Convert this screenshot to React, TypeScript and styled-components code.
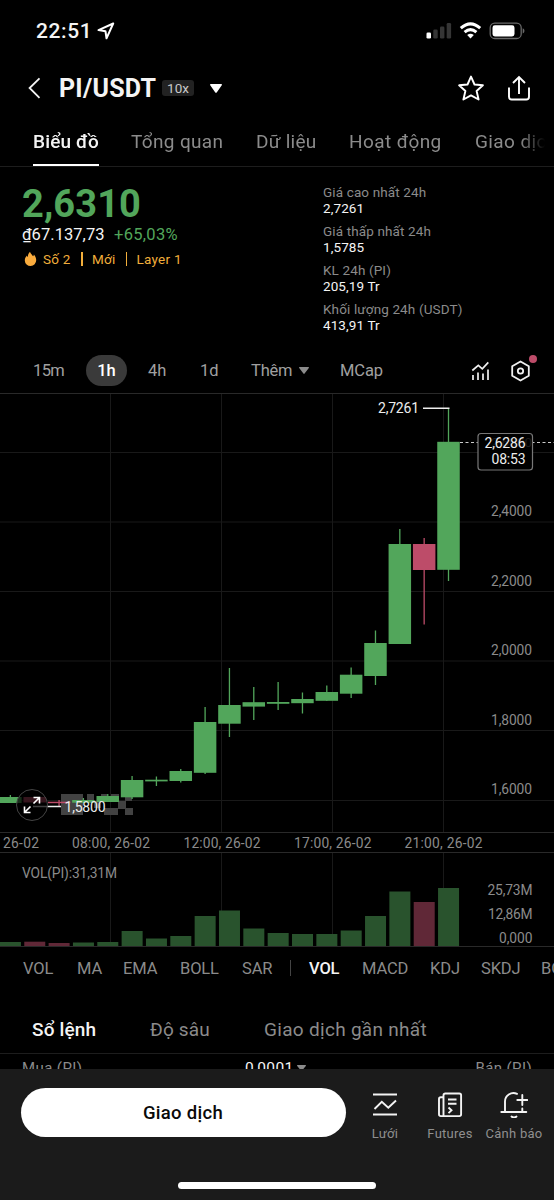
import React from "react";
import styled, { createGlobalStyle, css } from "styled-components";

const color = {
  bg: "#000",
  text: "#f4f4f4",
  muted: "#8b8b8b",
  line: "#1d1d1d",
  green: "#52a65b",
  red: "#bd4c69",
  greenDim: "#29532d",
  redDim: "#602837",
  amber: "#f2ae3b",
  bar: "#1b1b1b",
};

const fontStack = `Roboto, "Noto Sans", sans-serif`;

const GlobalStyle = createGlobalStyle`
  * { box-sizing: border-box; }
  body { margin: 0; background: ${color.bg}; overflow: hidden; }
`;

const Screen = styled.main`
  width: 554px;
  height: 1200px;
  display: flex;
  flex-direction: column;
  overflow: hidden;
  background: ${color.bg};
  color: ${color.text};
  font-family: ${fontStack};
  white-space: nowrap;
  svg { display: block; flex: none; }
`;

const StatusBar = styled.div`
  height: 60px;
  display: flex;
  align-items: center;
  padding: 2px 28px 0 36px;
`;

const Clock = styled.span`
  width: 57px;
  margin-right: 4px;
  font-size: 21px;
  font-weight: 500;
  letter-spacing: 0.6px;
`;

const Spacer = styled.div`
  flex: 1;
`;

const Header = styled.header`
  height: 57px;
  display: flex;
  align-items: center;
  padding: 0 22px 0 27px;
`;

const Pair = styled.h1`
  width: 98px;
  margin: 0 5px 0 17px;
  font-size: 25px;
  font-weight: 700;
  letter-spacing: 0.25px;
`;

const Leverage = styled.span`
  width: 32px;
  height: 16px;
  margin-right: 16px;
  border-radius: 3px;
  background: #222;
  color: #c9c9c9;
  font-size: 13.5px;
  line-height: 16.5px;
  text-align: center;
`;

const StarSlot = styled.div`
  margin-right: 21px;
`;

const Tabs = styled.nav`
  height: 50px;
  display: flex;
  flex: none;
  padding-left: 33px;
  border-bottom: 1.5px solid ${color.line};
  overflow: hidden;
  mask-image: linear-gradient(90deg, #000 520px, transparent 545px),
    linear-gradient(transparent 47px, #000 47px);
`;

const Tab = styled.div<{ $w: number; $gap: number; $active?: boolean; $ls?: number }>`
  position: relative;
  width: ${(p) => p.$w}px;
  height: 49px;
  flex: none;
  margin-right: ${(p) => p.$gap}px;
  line-height: 50px;
  font-size: 19px;
  letter-spacing: ${(p) => p.$ls ?? 0.4}px;
  color: ${(p) => (p.$active ? color.text : color.muted)};
  font-weight: ${(p) => (p.$active ? 500 : 400)};
  ${(p) =>
    p.$active &&
    css`
      border-bottom: 2.5px solid #fff;
    `}
`;

const Summary = styled.section`
  height: 181px;
  display: flex;
  padding: 15px 0 0 22px;
`;

const PriceColumn = styled.div`
  width: 301px;
`;

const LastPrice = styled.div`
  height: 43px;
  line-height: 45px;
  font-size: 38px;
  font-weight: 700;
  letter-spacing: 0.1px;
  color: ${color.green};
`;

const FiatRow = styled.div`
  display: flex;
  height: 20px;
  line-height: 20px;
  font-size: 16.5px;
`;

const Fiat = styled.span`
  width: 92px;
  letter-spacing: 0.05px;
`;

const Change = styled.span`
  color: ${color.green};
  letter-spacing: 0.3px;
`;

const TagRow = styled.div`
  display: flex;
  align-items: center;
  height: 29px;
  color: ${color.amber};
  font-size: 13.5px;
  letter-spacing: 0.25px;
`;

const Tag = styled.span<{ $w: number }>`
  width: ${(p) => p.$w}px;
`;

const TagRule = styled.span`
  width: 1.5px;
  height: 14px;
  margin-right: 9.5px;
  background: ${color.amber};
`;

const Stats = styled.dl`
  margin: 2px 0 0;
  font-size: 13.5px;
`;

const Stat = styled.div`
  height: 39px;
`;

const StatLabel = styled.dt`
  line-height: 16px;
  color: ${color.muted};
  letter-spacing: 0.13px;
`;

const StatValue = styled.dd`
  margin: 0;
  line-height: 16.5px;
  letter-spacing: 0.1px;
`;

const Intervals = styled.div`
  height: 46px;
  display: flex;
  align-items: center;
  padding: 1px 23px 0 33px;
  font-size: 16.5px;
  color: #a0a0a0;
`;

const Interval = styled.span<{ $w: number; $ls?: number }>`
  width: ${(p) => p.$w}px;
  letter-spacing: ${(p) => p.$ls ?? -0.1}px;
`;

const IntervalPill = styled.span`
  width: 41px;
  height: 31px;
  margin-right: 21px;
  border-radius: 16px;
  background: #3a3a3a;
  color: #fff;
  font-weight: 500;
  line-height: 31px;
  text-align: center;
`;

const SettingsSlot = styled.div`
  position: relative;
  margin-left: 20px;
`;

const NoticeDot = styled.i`
  position: absolute;
  top: -5px;
  right: -6px;
  width: 8px;
  height: 8px;
  border-radius: 50%;
  background: ${color.red};
`;

const ChartArea = styled.div`
  position: relative;
  height: 460px;
`;

const ExpandButton = styled.button`
  position: absolute;
  left: 16px;
  top: 396px;
  width: 32px;
  height: 32px;
  padding: 0;
  display: flex;
  align-items: center;
  justify-content: center;
  border: 1.5px solid #444;
  border-radius: 50%;
  background: rgba(0, 0, 0, 0.72);
`;

const Indicators = styled.div`
  height: 44px;
  display: flex;
  flex: none;
  align-items: center;
  padding: 0 0 4px 23px;
  overflow: hidden;
  font-size: 16.5px;
  color: ${color.muted};
`;

const Indicator = styled.span<{ $w: number; $active?: boolean }>`
  width: ${(p) => p.$w}px;
  flex: none;
  letter-spacing: -0.15px;
  color: ${(p) => (p.$active ? color.text : "inherit")};
  font-weight: ${(p) => (p.$active ? 500 : 400)};
`;

const IndicatorRule = styled.i`
  flex: none;
  width: 1px;
  height: 16px;
  margin-right: 18px;
  background: #444;
`;

const BookTabs = styled.div`
  height: 62px;
  display: flex;
  flex: none;
  align-items: center;
  padding: 14px 0 0 32px;
  border-bottom: 1px solid ${color.line};
`;

const BookTab = styled.span<{ $w: number; $active?: boolean; $ls?: number }>`
  width: ${(p) => p.$w}px;
  font-size: 19px;
  font-weight: ${(p) => (p.$active ? 500 : 400)};
  letter-spacing: ${(p) => p.$ls ?? 0.3}px;
  color: ${(p) => (p.$active ? color.text : color.muted)};
`;

const BookHead = styled.div`
  height: 15px;
  display: flex;
  flex: none;
  padding: 6px 22px 0;
  overflow: hidden;
  font-size: 15px;
  line-height: 17px;
  color: ${color.muted};
`;

const BookCell = styled.span<{ $w?: number; $ls?: number }>`
  width: ${(p) => (p.$w ? `${p.$w}px` : "auto")};
  letter-spacing: ${(p) => p.$ls ?? 0.4}px;
`;

const TickSize = styled.span`
  display: flex;
  gap: 4px;
  color: ${color.text};
  font-size: 15.5px;
  letter-spacing: 0.3px;
  svg { margin-top: 5px; }
`;

const Footer = styled.footer`
  height: 131px;
  flex: none;
  display: flex;
  flex-direction: column;
  background: ${color.bar};
`;

const Actions = styled.div`
  height: 113px;
  display: flex;
  align-items: flex-start;
  padding: 19px 0 0 21px;
`;

const TradeButton = styled.button`
  flex: none;
  width: 325px;
  height: 49px;
  padding: 0 1px 0 0;
  border: 0;
  border-radius: 25px;
  background: #fff;
  color: #0a0a0a;
  font: 500 18.5px ${fontStack};
  letter-spacing: 0.3px;
`;

const Shortcut = styled.div<{ $w: number }>`
  flex: none;
  width: ${(p) => p.$w}px;
  display: flex;
  flex-direction: column;
  align-items: center;
  gap: 6px;
  font-size: 13px;
  line-height: 20px;
  color: #8f8f8f;
  letter-spacing: 0.25px;
  svg { margin-top: 4px; }
`;

const HomeBar = styled.div`
  width: 198px;
  height: 7px;
  margin: 0 auto;
  border-radius: 4px;
  background: #fff;
`;

const Caret = ({ w = 10, h = 6, fill = "#8b8b8b" }) => (
  <svg width={w} height={h} viewBox="0 0 10 6" preserveAspectRatio="none">
    <path d="M.6 0h8.8c.5 0 .8.5.4.9L5.6 5.6c-.3.4-.9.4-1.2 0L.2.9C-.2.5.1 0 .6 0z" fill={fill} />
  </svg>
);

const StatusIcons = () => (
  <svg width="100" height="18" viewBox="0 0 100 18">
    <rect x="0.5" y="10.5" width="4.5" height="6" rx="1.3" fill="#fff" />
    <rect x="7.3" y="7.5" width="4.4" height="9" rx="1.3" fill="#353535" />
    <rect x="14" y="4.5" width="4.4" height="12" rx="1.3" fill="#353535" />
    <rect x="20.7" y="1" width="4.4" height="15.5" rx="1.3" fill="#353535" />
    <g fill="none" stroke="#fff" strokeWidth="3">
      <path d="M34.8 6.2q9.7-8.6 19.4 0" />
      <path d="M38.6 10.2q5.9-5.2 11.8 0" />
    </g>
    <path d="M41.2 13.1q3.3-2.7 6.6 0l-3.3 3.5z" fill="#fff" />
    <rect x="64.2" y="1.2" width="31" height="15.3" rx="4.6" fill="none" stroke="#686868" strokeWidth="1.3" />
    <rect x="66.5" y="3.3" width="22" height="11.2" rx="2.4" fill="#fff" />
    <path d="M96.7 6.3c2.3.8 2.3 4.4 0 5.2z" fill="#686868" />
  </svg>
);

type Candle = [high: number, top: number, bottom: number, low: number, volume: number, down?: boolean];

// Newest candle first; values are chart-space y coordinates, volume is a bar height.
const candles: Candle[] = [
  [16, 48.8, 176.8, 188, 58],
  [145, 151, 177, 231.5, 44, true],
  [136, 151, 251, 251, 54.5],
  [237.5, 250, 283, 292, 30],
  [274.5, 281.7, 300.7, 305, 15.5],
  [292.5, 299, 307.8, 308, 12],
  [299.5, 306, 310.2, 320.5, 12],
  [289, 309, 310.8, 317, 13],
  [294, 309.2, 313.6, 327, 17.5],
  [275, 312, 330.7, 344, 35.5],
  [314, 329, 379.8, 381, 30],
  [376, 378, 388, 389.5, 10],
  [383.5, 386.7, 388.4, 393, 7.5],
  [383, 387, 404.3, 406, 15],
  [401, 403, 409, 409, 4],
  [405, 407, 409.7, 410, 3.5],
  [407, 408.7, 410.2, 413, 3, true],
  [404, 404, 409.5, 410, 4.3, true],
  [402, 404, 410, 410, 4],
];
const centerOf = (i: number) => 448.45 - 24.34 * i;
const columns = [110.5, 221.5, 332.5, 443.5];
const rows = [59.5, 129, 198.5, 268, 337.5, 407.5];
const priceLabels: [string, number][] = [
  ["2,4000", 123],
  ["2,2000", 192.5],
  ["2,0000", 262],
  ["1,8000", 331.7],
  ["1,6000", 401.3],
];
const timeLabels: [string, number, number][] = [
  ["26-02", 3, 36],
  ["08:00, 26-02", 72, 78],
  ["12:00, 26-02", 183.5, 77],
  ["17:00, 26-02", 294, 77.5],
  ["21:00, 26-02", 404.5, 78],
];
const mosaic: [number, number, number, number][] = [
  [61, 401, 22, 21],
  [87, 401, 7, 7],
  [94, 408, 7, 7],
  [101, 401, 6, 7],
  [104, 415, 7, 7],
  [111, 401, 8, 7],
  [111, 415, 7, 7],
  [118, 408, 8, 8],
  [125, 415, 8, 7],
  [125, 403, 7, 5],
];

const PriceChart = () => (
  <svg width="554" height="460" viewBox="0 0 554 460" fontFamily={fontStack}>
    <g stroke="#191919">
      {columns.map((x) => <path key={x} d={`M${x} 0V439`} />)}
      {rows.map((y) => <path key={y} d={`M0 ${y}H554`} />)}
    </g>
    <path d="M0 .5H554M0 439.5H554M0 459.5H554" stroke="#292929" />
    {mosaic.map(([x, y, w, h], i) => <rect key={i} x={x} y={y} width={w} height={h} fill="#424242" />)}
    {candles.map(([high, top, bottom, low, , down], i) => {
      const x = centerOf(i);
      const fill = down ? color.red : color.green;
      return (
        <g key={i} fill={fill}>
          <rect x={x - 0.6} y={high} width="1.3" height={low - high} />
          <rect x={x - 11.2} y={top} width="22.5" height={bottom - top} />
        </g>
      );
    })}
    <path d="M33 413.5H61M423 15.2H449.5" stroke="#ededed" strokeWidth="1.6" />
    <g fill="#ededed" fontSize="14">
      <text x="378" y="20" textLength="41">2,7261</text>
      <text x="64.5" y="419" textLength="41">1,5800</text>
    </g>
    <path d="M460 49.5H554" stroke="#ccc" strokeDasharray="3 2.5" />
    <rect x="478" y="40.5" width="54.5" height="36.5" rx="3" fill="#000" stroke="#777" strokeWidth="1.2" />
    <text x="491" y="53.5" fontSize="13.5" fill="#1c1c1c" textLength="41">2,6000</text>
    <g fill="#ededed" fontSize="14">
      <text x="484.5" y="55.3" textLength="41">2,6286</text>
      <text x="491.5" y="71.3" textLength="34">08:53</text>
    </g>
    <g fill={color.muted} fontSize="13.8">
      {priceLabels.map(([label, y]) => <text key={label} x="491" y={y} textLength="41">{label}</text>)}
      {timeLabels.map(([label, x, w]) => <text key={label} x={x} y="455" textLength={w}>{label}</text>)}
    </g>
  </svg>
);

const VolumeChart = () => (
  <svg width="554" height="95" viewBox="0 0 554 95" fontFamily={fontStack}>
    <g stroke="#191919">
      {columns.map((x) => <path key={x} d={`M${x} 0V93`} />)}
    </g>
    {candles.map(([, , , , v, down], i) => (
      <rect key={i} x={centerOf(i) - 10.4} y={93 - v} width="21" height={v} fill={down ? color.redDim : color.greenDim} />
    ))}
    <path d="M0 93.5H554" stroke="#292929" />
    <g fill={color.muted} fontSize="13.8">
      <text x="22" y="24.5" textLength="95">VOL(PI):31,31M</text>
      <text x="487.5" y="42.3" textLength="45">25,73M</text>
      <text x="488" y="66" textLength="44.5">12,86M</text>
      <text x="499" y="89.5" textLength="33.5">0,000</text>
    </g>
  </svg>
);

export default function App() {
  return (
    <Screen>
      <GlobalStyle />
      <StatusBar>
        <Clock>22:51</Clock>
        <svg width="18" height="18" viewBox="0 0 18 18" fill="none" stroke="#fff" strokeWidth="2" strokeLinejoin="round">
          <path d="M16.2 1.5 1.5 8.1l7 1.2 1 7z" />
        </svg>
        <Spacer />
        <StatusIcons />
      </StatusBar>

      <Header>
        <svg width="15" height="22" viewBox="0 0 15 22" fill="none" stroke="#f4f4f4" strokeWidth="1.8">
          <path d="M12.5 1.3 2.6 11l9.9 9.8" />
        </svg>
        <Pair>PI/USDT</Pair>
        <Leverage>10x</Leverage>
        <Caret w={12} h={9} fill="#fff" />
        <Spacer />
        <StarSlot>
          <svg width="28" height="28" viewBox="0 0 28 28" fill="none" stroke="#fff" strokeWidth="1.9" strokeLinejoin="round">
            <path d="m14 2.6 3.5 7.9 8.4.8-6.3 5.7 2 8.500-7.600-4.100-7.600 4.100 2-8.500-6.300-5.700 8.400-.8z" />
          </svg>
        </StarSlot>
        <svg width="26" height="28" viewBox="0 0 26 28" fill="none" stroke="#fff" strokeWidth="1.900">
          <path d="M3 13.500v9.200q0 2.800 2.800 2.800h14.400q2.800 0 2.800-2.800v-9.200M13 20V3M7 9l6-6 6 6" />
        </svg>
      </Header>

      <Tabs>
        <Tab $w={66} $gap={32} $ls={0.15} $active>Biểu đồ</Tab>
        <Tab $w={92} $gap={33} $ls={0.35}>Tổng quan</Tab>
        <Tab $w={60} $gap={33} $ls={0.25}>Dữ liệu</Tab>
        <Tab $w={92} $gap={34}>Hoạt động</Tab>
        <Tab $w={90} $gap={0}>Giao dịch</Tab>
      </Tabs>

      <Summary>
        <PriceColumn>
          <LastPrice>2,6310</LastPrice>
          <FiatRow>
            <Fiat>₫67.137,73</Fiat>
            <Change>+65,03%</Change>
          </FiatRow>
          <TagRow>
            <svg width="21" height="16" viewBox="0 0 21 16">
              <path d="M8 .8c.4 2 2.3 3 3.1 4.500.7-.3.8-1.200.7-1.900 1.600 1.600 2.400 3.700 2.400 5.700a5.700 5.700 0 0 1-11.400.3c0-2.300 1.100-3.800 2.200-4.900.1.9.4 1.300.9 1.600C5.800 4 6.500 2.200 8 .8z" fill="#f9ab3d" />
            </svg>
            <Tag $w={38}>Số 2</Tag>
            <TagRule />
            <Tag $w={33.5}>Mới</Tag>
            <TagRule />
            <Tag $w={50}>Layer 1</Tag>
          </TagRow>
        </PriceColumn>
        <Stats>
          <Stat><StatLabel>Giá cao nhất 24h</StatLabel><StatValue>2,7261</StatValue></Stat>
          <Stat><StatLabel>Giá thấp nhất 24h</StatLabel><StatValue>1,5785</StatValue></Stat>
          <Stat><StatLabel>KL 24h (PI)</StatLabel><StatValue>205,19 Tr</StatValue></Stat>
          <Stat><StatLabel>Khối lượng 24h (USDT)</StatLabel><StatValue>413,91 Tr</StatValue></Stat>
        </Stats>
      </Summary>

      <Intervals>
        <Interval $w={53} $ls={-0.6}>15m</Interval>
        <IntervalPill>1h</IntervalPill>
        <Interval $w={52}>4h</Interval>
        <Interval $w={51}>1d</Interval>
        <Interval $w={48} $ls={-0.2}>Thêm</Interval>
        <Caret w={10} h={7} />
        <Spacer />
        <Interval $w={131}>MCap</Interval>
        <svg width="19" height="20" viewBox="0 0 19 20" fill="none" stroke="#f0f0f0" strokeWidth="1.7">
          <path d="m1.300 9.500 6-5.200 4 3.600 6-6.500M2 14v5M7 11.500v7.500M12 12.500v6.500M17 8.500v10.500" />
        </svg>
        <SettingsSlot>
          <svg width="21" height="22" viewBox="0 0 21 22" fill="none" stroke="#f0f0f0" strokeWidth="1.8" strokeLinejoin="round">
            <path d="m10.500 1.500 8.300 4.800v9.400l-8.300 4.800-8.300-4.800V6.300z" />
            <circle cx="10.500" cy="11" r="2.700" />
          </svg>
          <NoticeDot />
        </SettingsSlot>
      </Intervals>

      <ChartArea>
        <PriceChart />
        <ExpandButton aria-label="Expand">
          <svg width="20" height="20" viewBox="0 0 20 20" fill="none" stroke="#fff" strokeWidth="1.6">
            <path d="M11.500 8.500 17 3M11.500 2.500h6v6M8.500 11.500 3 17M2.500 11.500v6h6" />
          </svg>
        </ExpandButton>
      </ChartArea>
      <VolumeChart />

      <Indicators>
        <Indicator $w={54}>VOL</Indicator>
        <Indicator $w={46}>MA</Indicator>
        <Indicator $w={57}>EMA</Indicator>
        <Indicator $w={62}>BOLL</Indicator>
        <Indicator $w={48}>SAR</Indicator>
        <IndicatorRule />
        <Indicator $w={53} $active>VOL</Indicator>
        <Indicator $w={68}>MACD</Indicator>
        <Indicator $w={51}>KDJ</Indicator>
        <Indicator $w={60}>SKDJ</Indicator>
        <Indicator $w={50}>BOLL</Indicator>
      </Indicators>

      <BookTabs>
        <BookTab $w={118} $ls={0.15} $active>Sổ lệnh</BookTab>
        <BookTab $w={114} $ls={0.15}>Độ sâu</BookTab>
        <BookTab $w={180}>Giao dịch gần nhất</BookTab>
      </BookTabs>
      <BookHead>
        <BookCell $w={223}>Mua (PI)</BookCell>
        <TickSize>0,0001 <Caret w={9} h={6} /></TickSize>
        <Spacer />
        <BookCell>Bán (PI)</BookCell>
      </BookHead>

      <Footer>
        <Actions>
          <TradeButton>Giao dịch</TradeButton>
          <Shortcut $w={78}>
            <svg width="26" height="26" viewBox="0 0 26 26" fill="none" stroke="#f4f4f4" strokeWidth="1.900">
              <path d="M1 2.500h24M1 22.500h24M2.500 17l7.300-7.200 6.500 6L24 8.500" />
            </svg>
            Lưới
          </Shortcut>
          <Shortcut $w={52}>
            <svg width="26" height="26" viewBox="0 0 26 26" fill="none" stroke="#f4f4f4" strokeWidth="1.900">
              <path d="M6.500 24V3.300Q6.500 1.500 8.300 1.500h14q1.800 0 1.800 1.800v19q0 1.800-1.800 1.800H3.800Q2 24.100 2 22.300V7q0-1.800 1.800-1.800h2.700M11 7.500h8.500M11 11.800h8.500M11.500 15.500l3 2.800-3 2.800" />
            </svg>
            Futures
          </Shortcut>
          <Shortcut $w={76}>
            <svg width="28" height="26" viewBox="0 0 28 26" fill="none" stroke="#f4f4f4" strokeWidth="1.900" strokeLinecap="round">
              <path d="M1.300 20h25M5 19.500V9.800a8.500 8.500 0 0 1 12-8M22.300 16.500v3M22.300 3v10M17.300 8h10M11.500 24.500q2.500 2 5 0" />
            </svg>
            Cảnh báo
          </Shortcut>
        </Actions>
        <HomeBar />
      </Footer>
    </Screen>
  );
}
